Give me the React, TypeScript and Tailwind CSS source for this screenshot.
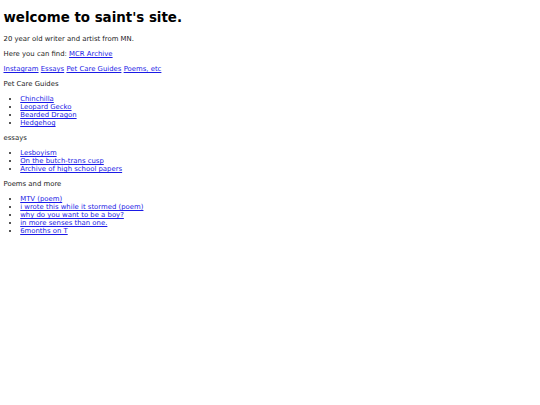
export default function App() {
  const pets = ['Chinchilla', 'Leopard Gecko', 'Bearded Dragon', 'Hedgehog'];
  const essays = ['Lesboyism', 'On the butch-trans cusp', 'Archive of high school papers'];
  const poems = ['MTV (poem)', 'i wrote this while it stormed (poem)', 'why do you want to be a boy?', 'in more senses than one.', '6months on T'];
  const link = 'text-[#1a1ae6] underline';

  return (
    <div className="min-h-[405px] bg-white px-[3.5px] py-px font-['DejaVu_Sans',sans-serif] text-[6.9px] leading-[8px] text-[#1a1a1a]">
      <h1 className="my-[9.2px] text-[13.4px] font-bold leading-[16px] text-black">welcome to saint's site.</h1>
      <p className="my-[7px]">20 year old writer and artist from MN.</p>
      <p className="my-[7px]">
        Here you can find: <a href="#" className={link}>MCR Archive</a>
      </p>
      <p className="my-[7px]">
        <a href="#" className={link}>Instagram</a> <a href="#" className={link}>Essays</a>{' '}
        <a href="#" className={link}>Pet Care Guides</a> <a href="#" className={link}>Poems, etc</a>
      </p>
      <p className="my-[7px]">Pet Care Guides</p>
      <ul className="my-[7px] list-disc pl-[16.7px]">
        {pets.map((t) => (
          <li key={t}>
            <a href="#" className={link}>{t}</a>
          </li>
        ))}
      </ul>
      <p className="my-[7px]">essays</p>
      <ul className="my-[7px] list-disc pl-[16.7px]">
        {essays.map((t) => (
          <li key={t}>
            <a href="#" className={link}>{t}</a>
          </li>
        ))}
      </ul>
      <p className="my-[7px]">Poems and more</p>
      <ul className="my-[7px] list-disc pl-[16.7px]">
        {poems.map((t) => (
          <li key={t}>
            <a href="#" className={link}>{t}</a>
          </li>
        ))}
      </ul>
    </div>
  );
}
